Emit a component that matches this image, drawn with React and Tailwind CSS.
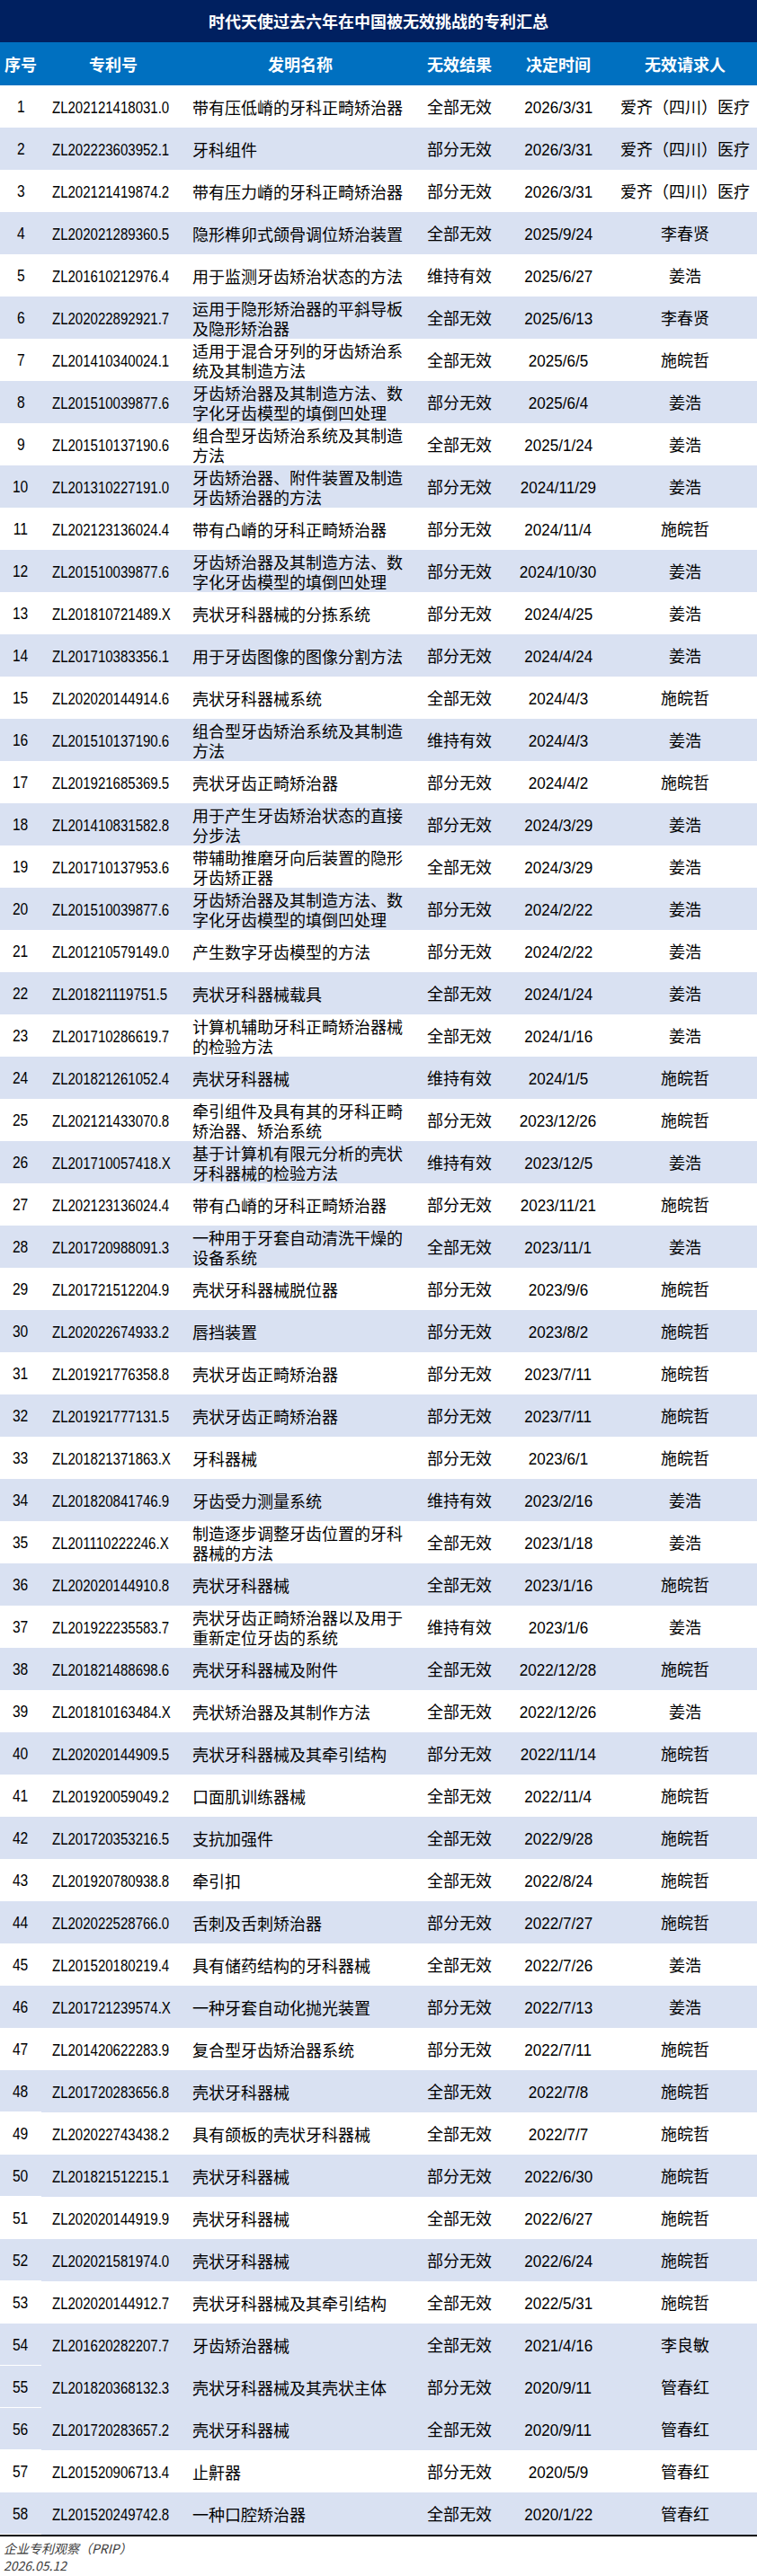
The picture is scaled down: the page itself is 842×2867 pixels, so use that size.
import React from 'react';

const rows = [
  ['ZL202121418031.0', '带有压低嵴的牙科正畸矫治器', '全部无效', '2026/3/31', '爱齐（四川）医疗'],
  ['ZL202223603952.1', '牙科组件', '部分无效', '2026/3/31', '爱齐（四川）医疗'],
  ['ZL202121419874.2', '带有压力嵴的牙科正畸矫治器', '部分无效', '2026/3/31', '爱齐（四川）医疗'],
  ['ZL202021289360.5', '隐形榫卯式颌骨调位矫治装置', '全部无效', '2025/9/24', '李春贤'],
  ['ZL201610212976.4', '用于监测牙齿矫治状态的方法', '维持有效', '2025/6/27', '姜浩'],
  ['ZL202022892921.7', '运用于隐形矫治器的平斜导板及隐形矫治器', '全部无效', '2025/6/13', '李春贤'],
  ['ZL201410340024.1', '适用于混合牙列的牙齿矫治系统及其制造方法', '全部无效', '2025/6/5', '施皖哲'],
  ['ZL201510039877.6', '牙齿矫治器及其制造方法、数字化牙齿模型的填倒凹处理', '部分无效', '2025/6/4', '姜浩'],
  ['ZL201510137190.6', '组合型牙齿矫治系统及其制造方法', '全部无效', '2025/1/24', '姜浩'],
  ['ZL201310227191.0', '牙齿矫治器、附件装置及制造牙齿矫治器的方法', '部分无效', '2024/11/29', '姜浩'],
  ['ZL202123136024.4', '带有凸嵴的牙科正畸矫治器', '部分无效', '2024/11/4', '施皖哲'],
  ['ZL201510039877.6', '牙齿矫治器及其制造方法、数字化牙齿模型的填倒凹处理', '部分无效', '2024/10/30', '姜浩'],
  ['ZL201810721489.X', '壳状牙科器械的分拣系统', '部分无效', '2024/4/25', '姜浩'],
  ['ZL201710383356.1', '用于牙齿图像的图像分割方法', '部分无效', '2024/4/24', '姜浩'],
  ['ZL202020144914.6', '壳状牙科器械系统', '全部无效', '2024/4/3', '施皖哲'],
  ['ZL201510137190.6', '组合型牙齿矫治系统及其制造方法', '维持有效', '2024/4/3', '姜浩'],
  ['ZL201921685369.5', '壳状牙齿正畸矫治器', '部分无效', '2024/4/2', '施皖哲'],
  ['ZL201410831582.8', '用于产生牙齿矫治状态的直接分步法', '部分无效', '2024/3/29', '姜浩'],
  ['ZL201710137953.6', '带辅助推磨牙向后装置的隐形牙齿矫正器', '全部无效', '2024/3/29', '姜浩'],
  ['ZL201510039877.6', '牙齿矫治器及其制造方法、数字化牙齿模型的填倒凹处理', '部分无效', '2024/2/22', '姜浩'],
  ['ZL201210579149.0', '产生数字牙齿模型的方法', '部分无效', '2024/2/22', '姜浩'],
  ['ZL201821119751.5', '壳状牙科器械载具', '全部无效', '2024/1/24', '姜浩'],
  ['ZL201710286619.7', '计算机辅助牙科正畸矫治器械的检验方法', '全部无效', '2024/1/16', '姜浩'],
  ['ZL201821261052.4', '壳状牙科器械', '维持有效', '2024/1/5', '施皖哲'],
  ['ZL202121433070.8', '牵引组件及具有其的牙科正畸矫治器、矫治系统', '部分无效', '2023/12/26', '施皖哲'],
  ['ZL201710057418.X', '基于计算机有限元分析的壳状牙科器械的检验方法', '维持有效', '2023/12/5', '姜浩'],
  ['ZL202123136024.4', '带有凸嵴的牙科正畸矫治器', '部分无效', '2023/11/21', '施皖哲'],
  ['ZL201720988091.3', '一种用于牙套自动清洗干燥的设备系统', '全部无效', '2023/11/1', '姜浩'],
  ['ZL201721512204.9', '壳状牙科器械脱位器', '部分无效', '2023/9/6', '施皖哲'],
  ['ZL202022674933.2', '唇挡装置', '部分无效', '2023/8/2', '施皖哲'],
  ['ZL201921776358.8', '壳状牙齿正畸矫治器', '部分无效', '2023/7/11', '施皖哲'],
  ['ZL201921777131.5', '壳状牙齿正畸矫治器', '部分无效', '2023/7/11', '施皖哲'],
  ['ZL201821371863.X', '牙科器械', '部分无效', '2023/6/1', '施皖哲'],
  ['ZL201820841746.9', '牙齿受力测量系统', '维持有效', '2023/2/16', '姜浩'],
  ['ZL201110222246.X', '制造逐步调整牙齿位置的牙科器械的方法', '全部无效', '2023/1/18', '姜浩'],
  ['ZL202020144910.8', '壳状牙科器械', '全部无效', '2023/1/16', '施皖哲'],
  ['ZL201922235583.7', '壳状牙齿正畸矫治器以及用于重新定位牙齿的系统', '维持有效', '2023/1/6', '姜浩'],
  ['ZL201821488698.6', '壳状牙科器械及附件', '全部无效', '2022/12/28', '施皖哲'],
  ['ZL201810163484.X', '壳状矫治器及其制作方法', '全部无效', '2022/12/26', '姜浩'],
  ['ZL202020144909.5', '壳状牙科器械及其牵引结构', '部分无效', '2022/11/14', '施皖哲'],
  ['ZL201920059049.2', '口面肌训练器械', '全部无效', '2022/11/4', '施皖哲'],
  ['ZL201720353216.5', '支抗加强件', '全部无效', '2022/9/28', '施皖哲'],
  ['ZL201920780938.8', '牵引扣', '全部无效', '2022/8/24', '施皖哲'],
  ['ZL202022528766.0', '舌刺及舌刺矫治器', '部分无效', '2022/7/27', '施皖哲'],
  ['ZL201520180219.4', '具有储药结构的牙科器械', '全部无效', '2022/7/26', '姜浩'],
  ['ZL201721239574.X', '一种牙套自动化抛光装置', '部分无效', '2022/7/13', '姜浩'],
  ['ZL201420622283.9', '复合型牙齿矫治器系统', '部分无效', '2022/7/11', '施皖哲'],
  ['ZL201720283656.8', '壳状牙科器械', '全部无效', '2022/7/8', '施皖哲'],
  ['ZL202022743438.2', '具有颌板的壳状牙科器械', '全部无效', '2022/7/7', '施皖哲'],
  ['ZL201821512215.1', '壳状牙科器械', '部分无效', '2022/6/30', '施皖哲'],
  ['ZL202020144919.9', '壳状牙科器械', '全部无效', '2022/6/27', '施皖哲'],
  ['ZL202021581974.0', '壳状牙科器械', '部分无效', '2022/6/24', '施皖哲'],
  ['ZL202020144912.7', '壳状牙科器械及其牵引结构', '全部无效', '2022/5/31', '施皖哲'],
  ['ZL201620282207.7', '牙齿矫治器械', '全部无效', '2021/4/16', '李良敏'],
  ['ZL201820368132.3', '壳状牙科器械及其壳状主体', '部分无效', '2020/9/11', '管春红'],
  ['ZL201720283657.2', '壳状牙科器械', '全部无效', '2020/9/11', '管春红'],
  ['ZL201520906713.4', '止鼾器', '部分无效', '2020/5/9', '管春红'],
  ['ZL201520249742.8', '一种口腔矫治器', '全部无效', '2020/1/22', '管春红'],
];

const cols = 'grid grid-cols-[46px_160px_256px_98px_122px_160px]';
// narrow tall digits, like the spreadsheet font
const num = "inline-block font-['Liberation_Sans',Arial,sans-serif] text-[19px] leading-none";

export default function App() {
  return (
    <div className="w-[842px] bg-white text-black font-['Noto_Sans_CJK_SC','Noto_Sans',sans-serif]">
      <div className="h-[47px] bg-[#002060] flex items-center justify-center text-white font-bold text-[18px]">
        时代天使过去六年在中国被无效挑战的专利汇总
      </div>
      <div className={`${cols} h-[48px] bg-[#0070c0] items-center text-white font-bold text-[18px] text-center`}>
        <div>序号</div>
        <div>专利号</div>
        <div>发明名称</div>
        <div>无效结果</div>
        <div>决定时间</div>
        <div>无效请求人</div>
      </div>
      {rows.map((r, i) => {
        const n = i + 1;
        const blue = n % 2 === 0 || n === 55;
        return (
          <div key={n} className={`${cols} h-[47px] items-center ${blue ? 'bg-[#d9e1f2]' : 'bg-white'}`}>
            <div className={`h-full flex items-center justify-center ${blue && n >= 48 ? 'border-b border-white' : ''}`}>
              <span className={`${num} scale-x-[0.82]`}>{n}</span>
            </div>
            <div className="pl-3 whitespace-nowrap">
              <span className={`${num} scale-x-[0.79] origin-left`}>{r[0]}</span>
            </div>
            <div className="pl-2 pr-3 text-[18px] leading-[22px]">{r[1]}</div>
            <div className="text-center text-[18px]">{r[2]}</div>
            <div className="text-center whitespace-nowrap">
              <span className={`${num} scale-x-[0.9]`}>{r[3]}</span>
            </div>
            <div className="text-center text-[18px] whitespace-nowrap">{r[4]}</div>
          </div>
        );
      })}
      <div className="h-[2px] bg-black" />
      <div className="pt-[4px] pl-1 italic text-[14px] leading-[19px] text-[#404040]">
        <div>企业专利观察（PRIP）</div>
        <div>2026.05.12</div>
      </div>
    </div>
  );
}
